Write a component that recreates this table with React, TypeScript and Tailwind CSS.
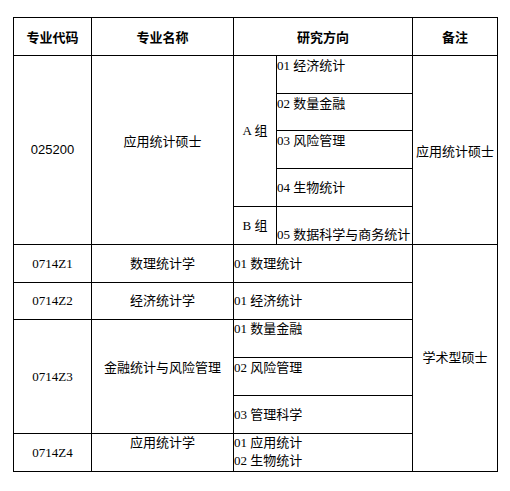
import React from "react";

const F = { fontFamily: '"Liberation Serif", "Noto Sans CJK SC", serif' } as const;

export default function App() {
  const cell = "border-r border-b border-black flex text-[13px] leading-[18px] text-black whitespace-nowrap overflow-visible";
  return (
    <div className="w-[510px] h-[491px] bg-white pt-[17px] pl-[13px]" style={F}>
      <div className="grid w-[485px] border-l border-t border-black grid-cols-[78px_142px_43px_136px_85px] grid-rows-[38px_38px_37px_38px_38px_38px_38px_37px_38px_38px_38px_38px]">
        {/* header */}
        <div className={`${cell} col-start-1 row-start-1 items-center justify-center font-bold`} style={{ fontFamily: '"Noto Sans CJK SC", sans-serif' }}>专业代码</div>
        <div className={`${cell} col-start-2 row-start-1 items-center justify-center font-bold`} style={{ fontFamily: '"Noto Sans CJK SC", sans-serif' }}>专业名称</div>
        <div className={`${cell} col-start-3 col-span-2 row-start-1 items-center justify-center font-bold`} style={{ fontFamily: '"Noto Sans CJK SC", sans-serif' }}>研究方向</div>
        <div className={`${cell} col-start-5 row-start-1 items-center justify-center font-bold`} style={{ fontFamily: '"Noto Sans CJK SC", sans-serif' }}>备注</div>

        {/* 025200 block */}
        <div className={`${cell} col-start-1 row-start-2 row-span-5 items-center justify-center text-[12px]`} style={{ fontFamily: '"Liberation Sans", sans-serif' }}>025200</div>
        <div className={`${cell} col-start-2 row-start-2 row-span-5 items-center justify-center pb-[16px]`}>应用统计硕士</div>
        <div className={`${cell} col-start-3 row-start-2 row-span-4 items-center justify-center`}>A 组</div>
        <div className={`${cell} col-start-3 row-start-6 items-center justify-center`}>B 组</div>
        <div className={`${cell} col-start-4 row-start-2 items-start pt-px`}>01 经济统计</div>
        <div className={`${cell} col-start-4 row-start-3 items-start pt-px`}>02 数量金融</div>
        <div className={`${cell} col-start-4 row-start-4 items-start pt-px`}>03 风险管理</div>
        <div className={`${cell} col-start-4 row-start-5 items-center`}>04 生物统计</div>
        <div className={`${cell} col-start-4 row-start-6 items-end`}>05 数据科学与商务统计</div>
        <div className={`${cell} col-start-5 row-start-2 row-span-5 items-center pl-[3px] pt-[4px]`}>应用统计硕士</div>

        {/* 0714Z1 */}
        <div className={`${cell} col-start-1 row-start-7 items-center justify-center`}>0714Z1</div>
        <div className={`${cell} col-start-2 row-start-7 items-center justify-center`}>数理统计学</div>
        <div className={`${cell} col-start-3 col-span-2 row-start-7 items-center`}>01 数理统计</div>

        {/* 0714Z2 */}
        <div className={`${cell} col-start-1 row-start-8 items-center justify-center`}>0714Z2</div>
        <div className={`${cell} col-start-2 row-start-8 items-center justify-center`}>经济统计学</div>
        <div className={`${cell} col-start-3 col-span-2 row-start-8 items-center`}>01 经济统计</div>

        {/* 0714Z3 */}
        <div className={`${cell} col-start-1 row-start-9 row-span-3 items-center justify-center`}>0714Z3</div>
        <div className={`${cell} col-start-2 row-start-9 row-span-3 items-center justify-center pb-[18px]`}>金融统计与风险管理</div>
        <div className={`${cell} col-start-3 col-span-2 row-start-9 items-start`}>01 数量金融</div>
        <div className={`${cell} col-start-3 col-span-2 row-start-10 items-start pt-px`}>02 风险管理</div>
        <div className={`${cell} col-start-3 col-span-2 row-start-11 items-center`}>03 管理科学</div>

        {/* 0714Z4 */}
        <div className={`${cell} col-start-1 row-start-12 items-center justify-center`}>0714Z4</div>
        <div className={`${cell} col-start-2 row-start-12 items-start justify-center`}>应用统计学</div>
        <div className={`${cell} col-start-3 col-span-2 row-start-12 flex-col items-start`}>
          <span>01 应用统计</span>
          <span>02 生物统计</span>
        </div>

        <div className={`${cell} col-start-5 row-start-7 row-span-6 items-center justify-center`}>学术型硕士</div>
      </div>
    </div>
  );
}
